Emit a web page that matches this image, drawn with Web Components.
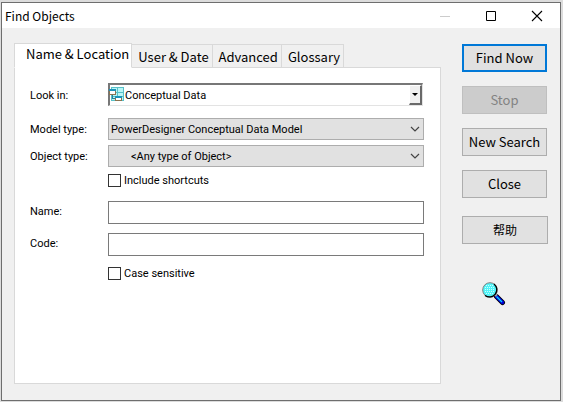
<!DOCTYPE html>
<html lang="en">
<head>
<meta charset="utf-8">
<title>Find Objects</title>
<style>
  body {
    margin: 0;
    background: #dcdcdc;
    color: #000;
    font: 13px/18px "Noto Sans CJK SC", "Noto Sans", sans-serif;
  }
</style>
</head>
<body>
<find-dialog></find-dialog>
<script>
const define = (name, html, setup) => {
  const template = document.createElement('template');
  template.innerHTML = html;
  customElements.define(name, class extends HTMLElement {
    constructor() {
      super();
      this.attachShadow({ mode: 'open' }).append(template.content.cloneNode(true));
    }
    connectedCallback() {
      if (setup) setup(this, this.shadowRoot);
    }
  });
};

define('title-bar', `
<style>
  :host { display: flex; align-items: center; height: 25px; background: #fff; padding-left: 3px; font-size: 12px; }
  h1 { flex: 1; margin: 0; font: inherit; }
  button { width: 46px; height: 25px; padding: 0; border: 0; background: none; display: grid; place-items: center; }
  svg { display: block; }
</style>
<h1><slot></slot></h1>
<button type="button" aria-label="Minimize" disabled><svg width="12" height="12"><path d="M1 6.5h10" stroke="#ccc"/></svg></button>
<button type="button" aria-label="Maximize"><svg width="12" height="12"><path d="M1.5 1.5h9v9h-9z" fill="none" stroke="#000"/></svg></button>
<button type="button" aria-label="Close window"><svg width="12" height="12"><path d="M1 1l10 10M11 1L1 11" fill="none" stroke="#000" stroke-width="1.1"/></svg></button>
`);

define('tab-strip', `
<style>
  :host { display: flex; align-items: flex-end; position: relative; z-index: 1; margin-bottom: -1px; }
  button { font: inherit; color: inherit; white-space: nowrap; height: 24px; padding: 1px 3px 0 6px; border: 1px solid #d9d9d9; border-left: 0; background: #f0f0f0; }
  button[aria-selected=true] { height: 25px; padding: 0 2px 3px 11px; border-left: 1px solid #d9d9d9; border-bottom-color: #fff; background: #fff; }
  div { display: flex; align-items: flex-end; }
</style>
<div role="tablist">
  <button role="tab" aria-selected="true">Name &amp; Location</button>
  <button role="tab" aria-selected="false">User &amp; Date</button>
  <button role="tab" aria-selected="false">Advanced</button>
  <button role="tab" aria-selected="false">Glossary</button>
</div>
`);

define('model-icon', `
<style>:host { display: block; } svg { display: block; }</style>
<svg width="16" height="16" shape-rendering="crispEdges">
  <path d="M2 1h13v14H2z" fill="#b8f6f6"/>
  <path d="M2.5 1v14M8.500 1v14M14.500 1v14M2 1.500h13M2 6.500h13M2 10.500h13M2 14.500h13" stroke="#58c0c8" fill="none"/>
  <path d="M3.500 8v4h4" stroke="#2a7f98" fill="none"/>
  <path d="M.5 3.500h6v5h-6zM6.500 10.500h6v4h-6z" fill="#fff" stroke="#8a7350"/>
  <path d="M0 3h7v2H0zM6 10h7v2H6z" fill="#1c93b8"/>
</svg>
`);

define('choice-field', `
<style>
  :host { display: grid; grid-template-columns: 78px 1fr; align-items: center; }
  label { padding-top: 2px; }
  .box { position: relative; display: grid; }
  select { appearance: none; width: 100%; min-width: 0; height: 22px; margin: 0; padding: 1px 20px 0 2px; border: 1px solid #adadad; border-radius: 0; background: #e1e1e1; color: #000; font: inherit; }
  svg { position: absolute; right: 4px; top: 8px; pointer-events: none; }
  :host([indent]) select { padding-left: 22px; }
  model-icon, i { display: none; }
  :host([sunken]) .box { margin-right: 1px; }
  :host([sunken]) select { height: 23px; background: #fff; border: 1px solid #e3e3e3; border-top: 2px solid #777; border-left: 2px solid #777; padding-left: 15px; }
  :host([sunken]) svg { display: none; }
  :host([sunken]) model-icon { display: block; position: absolute; left: 1px; top: 3px; pointer-events: none; }
  :host([sunken]) i { display: grid; place-items: center; position: absolute; box-sizing: border-box; right: 1px; top: 2px; bottom: 1px; width: 13px; background: #f0f0f0; border: 1px solid #fff; border-right: 2px solid #696969; border-bottom: 2px solid #696969; pointer-events: none; }
  i::before { content: ""; border: 3px solid transparent; border-top-color: #000; border-bottom: 0; }
</style>
<label for="choice"></label>
<span class="box">
  <select id="choice"><option></option></select>
  <model-icon></model-icon><i></i>
  <svg width="10" height="7"><path d="M1 1l4 4 4-4" fill="none" stroke="#444" stroke-width="1.200"/></svg>
</span>
`, (host, root) => {
  root.querySelector('label').textContent = host.getAttribute('label');
  root.querySelector('option').textContent = host.getAttribute('value');
});

define('text-field', `
<style>
  :host { display: grid; grid-template-columns: 78px 1fr; align-items: center; }
  input { box-sizing: border-box; width: 100%; min-width: 0; height: 23px; margin: 0; padding: 0 3px; border: 1px solid #7a7a7a; border-radius: 0; background: #fff; font: inherit; }
  label { padding-bottom: 1px; }
</style>
<label for="text"><slot></slot></label>
<input id="text" type="text">
`);

define('check-field', `
<style>
  :host { display: flex; align-items: center; gap: 3px; margin-left: 78px; }
  input { appearance: none; box-sizing: border-box; width: 13px; height: 13px; margin: 0; border: 1px solid #333; background: #fff; }
  input:checked { background: #333; }
  label { line-height: 13px; }
</style>
<input id="check" type="checkbox">
<label for="check"><slot></slot></label>
`);

define('search-form', `
<style>
  :host { display: block; flex: 1; background: #fff; border: 1px solid #d9d9d9; padding: 15px 16px 15px 15px; font: 11px/16px Roboto, "Liberation Sans", sans-serif; }
  form { display: flex; flex-direction: column; }
  .choices { display: grid; gap: 5px; }
  .choices :first-child { margin-bottom: 7px; }
  .texts { display: grid; gap: 9px; margin: 14px 0 11px; }
  .choices + check-field { margin-top: 7px; }
</style>
<form>
  <div class="choices">
    <choice-field sunken label="Look in:" value="Conceptual Data"></choice-field>
    <choice-field label="Model type:" value="PowerDesigner Conceptual Data Model"></choice-field>
    <choice-field indent label="Object type:" value="&lt;Any type of Object&gt;"></choice-field>
  </div>
  <check-field>Include shortcuts</check-field>
  <div class="texts">
    <text-field>Name:</text-field>
    <text-field>Code:</text-field>
  </div>
  <check-field>Case sensitive</check-field>
</form>
`);

define('push-button', `
<style>
  :host { display: block; }
  button { box-sizing: border-box; width: 100%; height: 28px; padding: 0; border: 1px solid #adadad; background: #e1e1e1; color: #000; font: inherit; white-space: nowrap; }
  :host([default]) button { border: 2px solid #0078d7; }
  button:disabled { background: #ccc; border-color: #bfbfbf; color: #838383; }
</style>
<button type="button"><slot></slot></button>
`, (host, root) => {
  root.querySelector('button').disabled = host.hasAttribute('disabled');
});

define('search-glass', `
<style>:host { display: block; } svg { display: block; }</style>
<svg width="24" height="24" role="img" aria-label="Search">
  <path d="M14.500 14.500l6 6" stroke="#000" stroke-width="5" stroke-linecap="round"/>
  <path d="M14.500 14.500l6 6" stroke="#0000d8" stroke-width="3.400" stroke-linecap="round"/>
  <path d="M14.500 14.500l5.500 5.500" stroke="#00d8ff" stroke-width="1.300"/>
  <path d="M13 14l2-2" stroke="#aaa" stroke-width="2"/>
  <circle cx="8" cy="8" r="7.300" fill="#50f4f8" stroke="#808080"/>
  <path d="M4 3.500h8M3 5.500h10M3 7.500h10M3 9.500h10M4 11.500h8" stroke="#c8ffff" stroke-dasharray="1 1" shape-rendering="crispEdges"/>
  <path d="M12 1.900A7.300 7.300 0 0 1 3 13.400" fill="none" stroke="#000" stroke-width="1.300"/>
</svg>
`);

define('find-dialog', `
<style>
  :host { display: flex; flex-direction: column; box-sizing: border-box; min-height: 100vh; padding: 2px 2px 1px 1px; }
  .frame { flex: 1; display: flex; flex-direction: column; border: 1px solid #6e6e6e; background: #f0f0f0; }
  .body { flex: 1; display: flex; gap: 21px; padding: 15px 13px 16px 12px; }
  .tabs { flex: 1; display: flex; flex-direction: column; }
  .actions { width: 85px; display: flex; flex-direction: column; gap: 14px; padding-top: 1px; }
  .help { margin: 4px -1px 0 0; font-size: 12px; }
  search-glass { margin: 24px 0 0 20px; }
</style>
<div class="frame">
  <title-bar>Find Objects</title-bar>
  <div class="body">
    <div class="tabs">
      <tab-strip></tab-strip>
      <search-form></search-form>
    </div>
    <div class="actions">
      <push-button default>Find Now</push-button>
      <push-button disabled>Stop</push-button>
      <push-button>New Search</push-button>
      <push-button>Close</push-button>
      <push-button class="help" lang="zh">帮助</push-button>
      <search-glass></search-glass>
    </div>
  </div>
</div>
`);
</script>
</body>
</html>
